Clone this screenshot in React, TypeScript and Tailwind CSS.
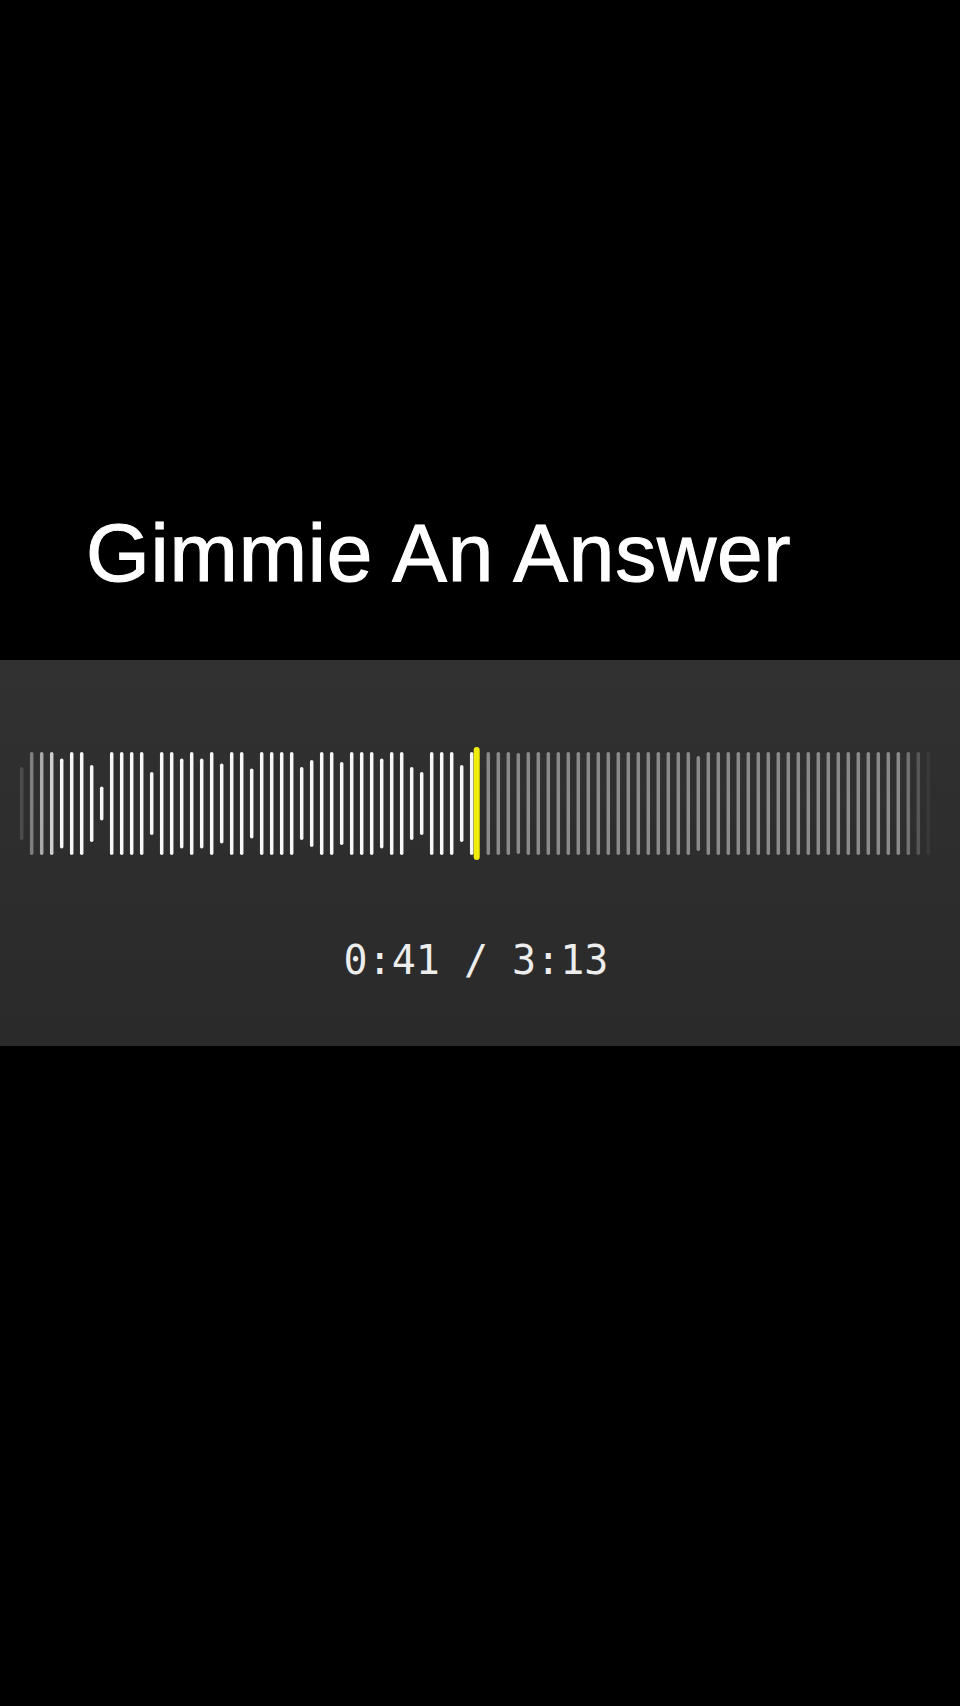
import React from "react";

const whiteHeights = [
  73, 103, 103, 103, 90, 103, 103, 77, 34, 103, 103, 103, 103, 63, 103, 103,
  90, 103, 90, 103, 80, 103, 103, 70, 103, 103, 103, 103, 73, 87, 103, 103,
  83, 103, 103, 103, 90, 103, 103, 73, 63, 103, 103, 103, 77, 103,
];
const whiteOpacity = (i: number) => (i === 0 ? 0.15 : i === 1 ? 0.4 : i === 2 ? 0.62 : i === 3 ? 0.8 : 1);

const greyCount = 45;
const greyOpacity = (j: number) => (j === 44 ? 0.12 : j === 43 ? 0.45 : j === 42 ? 0.75 : 1);
const greyHeight = (j: number) => (j === 21 ? 95 : j === 3 ? 101 : 103);

function Waveform() {
  const cy = 58.5;
  const bw = 3.5;
  return (
    <svg width={960} height={117} viewBox="0 0 960 117" className="block">
      {whiteHeights.map((h, i) => {
        const x = 21.7 + 10 * i;
        return (
          <rect
            key={"w" + i}
            x={x - bw / 2}
            y={cy - h / 2}
            width={bw}
            height={h}
            rx={1.75}
            fill="#f7f7f7"
            opacity={whiteOpacity(i)}
          />
        );
      })}
      {Array.from({ length: greyCount }).map((_, j) => {
        const x = 488.3 + 10 * j;
        const h = greyHeight(j);
        return (
          <rect
            key={"g" + j}
            x={x - bw / 2}
            y={cy - h / 2}
            width={bw}
            height={h}
            rx={1.75}
            fill="#8a8a8a"
            opacity={greyOpacity(j)}
          />
        );
      })}
      <rect x={473.7} y={2} width={6} height={113} rx={3} fill="#f0ec0c" />
    </svg>
  );
}

export default function App() {
  return (
    <div className="w-[960px] h-[1706px] bg-black flex flex-col">
      <div className="h-[660px] flex flex-col justify-end pb-[66px] pl-[86px]">
        <h1
          className="text-white text-[82px] leading-[82px] font-normal tracking-[0.8px] [-webkit-text-stroke:1.1px_white]"
          style={{ fontFamily: '"Liberation Sans", Arial, sans-serif' }}
        >
          Gimmie An Answer
        </h1>
      </div>
      <div className="h-[386px] bg-gradient-to-b from-[#313131] to-[#2a2a2a] flex flex-col items-start pt-[85px]">
        <Waveform />
        <div className="w-[952px] flex justify-center mt-[78px]">
          <span
            className="text-[#ededed] text-[40px] leading-[40px]"
            style={{ fontFamily: '"DejaVu Sans Mono", monospace' }}
          >
            0:41 / 3:13
          </span>
        </div>
      </div>
      <div className="flex-1 bg-black" />
    </div>
  );
}
